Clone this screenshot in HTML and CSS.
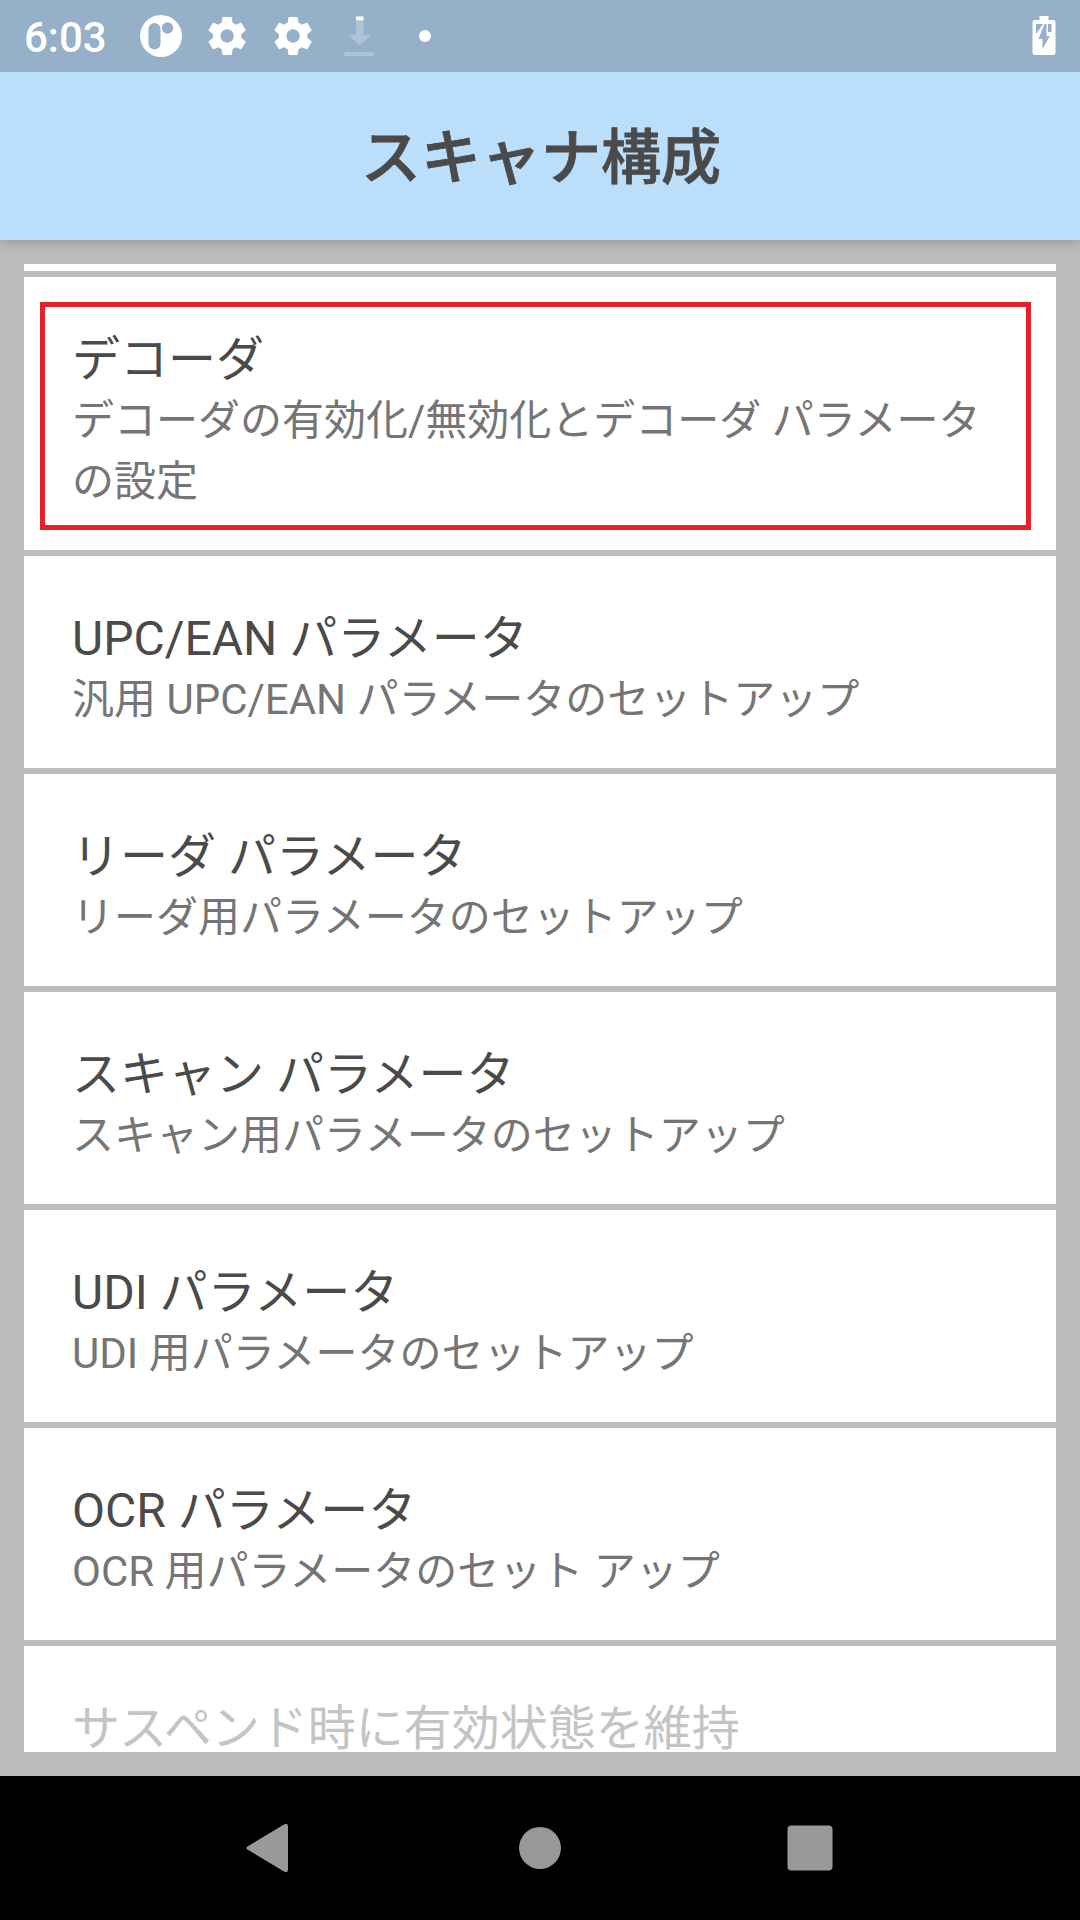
FILE: index.html
```html
<!DOCTYPE html>
<html lang="ja">
<head>
<meta charset="utf-8">
<title>スキャナ構成</title>
<link rel="stylesheet" href="styles.css">
</head>
<body>
<div class="status">
  <span class="clock">6:03</span>
  <svg class="status-icons" width="300" height="72" viewBox="135 0 300 72">
    <defs>
      <path id="gear" d="M19.43 12.98c.04-.32.07-.64.07-.98s-.03-.66-.07-.98l2.11-1.65c.19-.15.24-.42.12-.64l-2-3.46c-.12-.22-.39-.3-.61-.22l-2.49 1c-.52-.4-1.08-.73-1.69-.98l-.38-2.65C14.46 2.180 14.25 2 14 2h-4c-.25 0-.46.18-.49.42l-.38 2.650c-.61.25-1.17.59-1.69.98l-2.49-1c-.23-.09-.49 0-.61.22l-2 3.460c-.13.22-.07.49.12.64l2.110 1.650c-.04.32-.07.65-.07.98s.03.66.07.98l-2.110 1.650c-.19.15-.24.42-.12.64l2 3.460c.12.22.39.3.61.22l2.490-1c.52.4 1.080.73 1.690.98l.38 2.650c.03.24.24.42.49.42h4c.25 0 .46-.18.49-.42l.38-2.650c.61-.25 1.170-.59 1.690-.98l2.490 1c.23.09.49 0 .61-.22l2-3.460c.12-.22.07-.49-.12-.64l-2.110-1.650zM12 15.500c-1.930 0-3.500-1.570-3.500-3.500s1.570-3.500 3.500-3.500 3.500 1.570 3.500 3.500-1.570 3.500-3.500 3.500z"/>
    </defs>
    <circle cx="161" cy="36" r="21" fill="#fff"/>
    <rect x="148.500" y="23" width="12" height="26.500" rx="6" fill="#95b0c8"/>
    <circle cx="167.500" cy="28" r="5.700" fill="#95b0c8"/>
    <use href="#gear" fill="#fff" transform="translate(204.300 13.200) scale(1.9)"/>
    <use href="#gear" fill="#fff" transform="translate(270.300 13.200) scale(1.9)"/>
    <path d="M356 20h7.500v15h8L359.700 45.500 348 35h8zM344.500 52h29.500v4h-29.500z" fill="#acc3d8"/>
    <path d="M356 16.500h7.500v3.800H356z" fill="#fff"/>
    <circle cx="425" cy="36" r="6" fill="#fff"/>
  </svg>
  <svg class="battery" width="24" height="40" viewBox="0 0 24 40">
    <path d="M7.500 0h9v4H21q2.500 0 2.500 2.500v30q0 2.500-2.500 2.500H3Q.5 39 .5 36.500v-30Q.5 4 3 4h4.500z" fill="#fff"/>
    <path d="M4 8h7L4 18zM12.500 8h2v12H18L10.500 33V23H6.500zM16 8h3.500v8H16z" fill="#95b0c8"/>
  </svg>
</div>
<header class="appbar"><h1>スキャナ構成</h1></header>
<main class="content">
  <div class="list">
    <div class="item stub"></div>
    <div class="item tall">
      <div class="title">デコーダ</div>
      <div class="summary">デコーダの有効化/無効化とデコーダ パラメータの設定</div>
      <div class="highlight"></div>
    </div>
    <div class="item"><div class="title">UPC/EAN パラメータ</div><div class="summary">汎用 UPC/EAN パラメータのセットアップ</div></div>
    <div class="item"><div class="title">リーダ パラメータ</div><div class="summary">リーダ用パラメータのセットアップ</div></div>
    <div class="item"><div class="title">スキャン パラメータ</div><div class="summary">スキャン用パラメータのセットアップ</div></div>
    <div class="item"><div class="title">UDI パラメータ</div><div class="summary">UDI 用パラメータのセットアップ</div></div>
    <div class="item"><div class="title">OCR パラメータ</div><div class="summary">OCR 用パラメータのセット アップ</div></div>
    <div class="item disabled"><div class="title">サスペンド時に有効状態を維持</div></div>
  </div>
</main>
<nav class="navbar">
  <svg width="48" height="52" viewBox="0 0 48 52"><path d="M1.500 24.500 38 2.500q4-2 4 2v43q0 4-4 2L1.500 27.500q-2.500-1.500 0-3z" fill="#999"/></svg>
  <svg width="48" height="52" viewBox="0 0 48 52"><circle cx="24" cy="26" r="21" fill="#999"/></svg>
  <svg width="48" height="52" viewBox="0 0 48 52"><rect x="1.500" y="3.500" width="45" height="45" rx="4" fill="#999"/></svg>
</nav>
</body>
</html>
```
FILE: styles.css
```css
* {
  box-sizing: border-box;
}

body {
  margin: 0;
  width: 1080px;
  height: 1920px;
  display: flex;
  flex-direction: column;
  overflow: hidden;
  background: #bdbdbd;
  font-family: Roboto, "Noto Sans CJK JP", sans-serif;
}

.status {
  position: relative;
  z-index: 1;
  height: 72px;
  flex: none;
  display: flex;
  align-items: center;
  padding: 0 24px;
  background: #95b0c8;
}

.clock {
  width: 111px;
  padding-top: 3px;
  color: #fff;
  font-size: 42px;
  font-weight: 500;
  line-height: 50px;
}

.battery {
  margin: 0 0 0 auto;
}

.appbar {
  position: relative;
  height: 168px;
  flex: none;
  display: flex;
  align-items: center;
  justify-content: center;
  padding: 5px 0 0 2px;
  background: #bbdefb;
  box-shadow: 0 3px 12px rgba(0, 0, 0, 0.2);
}

.appbar h1 {
  margin: 0;
  color: #4a4a4a;
  font-size: 60px;
  font-weight: 500;
  line-height: 88px;
  -webkit-text-stroke: 0.8px #4a4a4a;
}

.content {
  flex: 1;
  min-height: 0;
  padding: 24px;
}

.list {
  height: 100%;
  display: flex;
  flex-direction: column;
  gap: 6px;
  overflow: hidden;
}

.item {
  position: relative;
  flex: none;
  height: 212px;
  padding: 52px 48px 0;
  background: #fff;
}

.stub {
  height: 7px;
  padding: 0;
}

.tall {
  height: 273px;
}

.title {
  color: #4a4a4a;
  font-size: 48px;
  line-height: 61px;
}

.summary {
  color: #757575;
  font-size: 42px;
  line-height: 61px;
}

.disabled {
  height: 106px;
  padding-top: 60px;
}

.disabled .title {
  color: #c4c4c4;
  line-height: 45px;
}

.highlight {
  position: absolute;
  left: 16px;
  top: 25px;
  width: 991px;
  height: 228px;
  border: 5px solid #e62129;
}

.navbar {
  height: 144px;
  flex: none;
  display: flex;
  align-items: center;
  justify-content: center;
  gap: 222px;
  background: #000;
}
```
